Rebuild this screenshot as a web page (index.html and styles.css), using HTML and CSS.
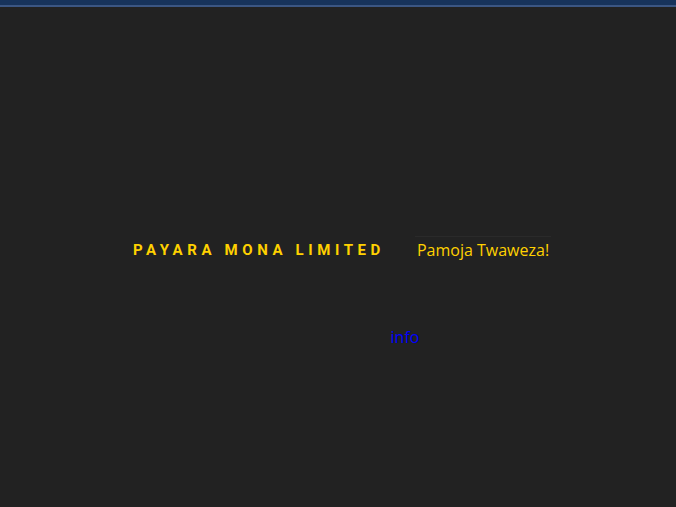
FILE: index.html
```html
<!DOCTYPE html>
<html>
<head>
<meta charset="utf-8">
<link rel="stylesheet" href="styles.css">
</head>
<body>
<div class="topbar"></div>
<main class="page">
  <header class="brand">
    <h1 class="brand-name">PAYARA MONA LIMITED</h1>
    <p class="brand-tagline">Pamoja Twaweza!</p>
  </header>
  <nav class="links">
    <a class="link" href="#">info</a>
  </nav>
</main>
</body>
</html>
```
FILE: styles.css
```css
html, body {
  margin: 0;
  padding: 0;
  background: #222222;
  height: 100%;
}
body {
  font-family: "Open Sans", sans-serif;
}
.topbar {
  height: 5px;
  background: #17335b;
  border-bottom: 2px solid #3b5683;
}
.page {
  display: flex;
  flex-direction: column;
  align-items: center;
  padding-top: 229px;
}
.brand {
  display: flex;
  align-items: center;
  gap: 30px;
  margin-left: 8px;
}
.brand-name {
  margin: 0;
  font-family: Roboto, sans-serif;
  font-weight: 700;
  font-size: 15px;
  letter-spacing: 4.6px;
  color: #ffd100;
}
.brand-tagline {
  margin: 0;
  padding: 0 2px;
  border-top: 1px solid #2a2a2a;
  font-size: 16px;
  line-height: 26px;
  color: #ffd100;
}
.links {
  margin-top: 63px;
  margin-left: 134px;
}
.link {
  font-size: 16px;
  color: #0000ff;
  text-decoration: none;
}
```
